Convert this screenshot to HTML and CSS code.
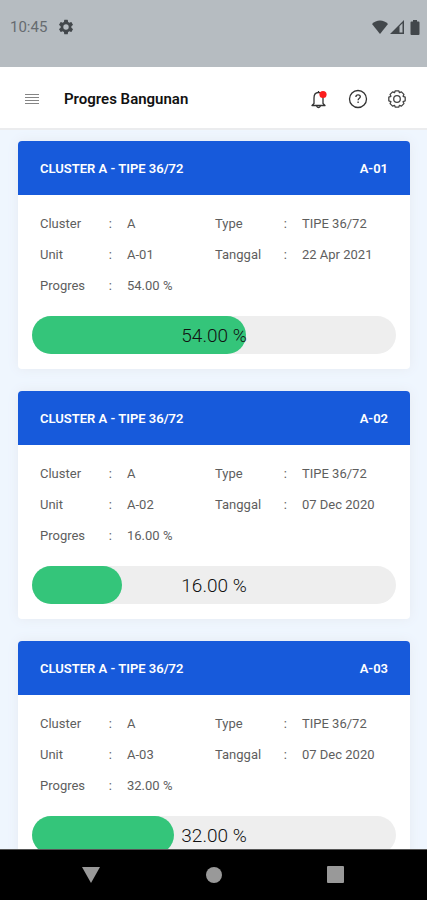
FILE: index.html
```
<!DOCTYPE html>
<html lang="id">
<head>
<meta charset="utf-8">
<meta name="viewport" content="width=device-width, initial-scale=1">
<title>Progres Bangunan</title>
<link rel="stylesheet" href="styles.css">
</head>
<body>
<div class="screen">
  <div class="status-bar">
    <span class="clock">10:45</span>
    <svg class="status-gear" width="18" height="18" viewBox="0 0 24 24" aria-hidden="true"><path fill="currentColor" d="M19.14 12.94c.04-.3.06-.61.06-.94s-.02-.64-.07-.94l2.03-1.58a.49.49 0 0 0 .12-.61l-1.92-3.32a.49.49 0 0 0-.59-.22l-2.39.96a7 7 0 0 0-1.62-.94l-.36-2.54A.48.48 0 0 0 13.92 2.4h-3.84a.48.48 0 0 0-.47.41l-.36 2.54c-.59.24-1.13.57-1.62.94l-2.39-.96a.48.48 0 0 0-.59.22L2.74 8.87a.48.48 0 0 0 .12.61l2.03 1.58a6 6 0 0 0 0 1.88l-2.03 1.58a.49.49 0 0 0-.12.61l1.92 3.32c.12.22.37.29.59.22l2.39-.96c.5.38 1.03.7 1.62.94l.36 2.54c.05.24.24.41.48.41h3.84c.24 0 .44-.17.47-.41l.36-2.54a7 7 0 0 0 1.62-.94l2.39.96c.22.08.47 0 .59-.22l1.92-3.32a.48.48 0 0 0-.12-.61zM12 15.6a3.6 3.6 0 1 1 0-7.2 3.6 3.6 0 0 1 0 7.2z"/></svg>
    <div class="status-icons" aria-hidden="true">
      <svg width="16" height="14" viewBox="0 0 16 14"><path fill="currentColor" d="M8 14 0 4C2 1.800 5 .5 8 .5S14 1.800 16 4z"/></svg>
      <svg class="signal" width="14" height="14" viewBox="0 0 14 14"><path fill="currentColor" d="M0 14 14 0v14zM9.500 6.300v6.200h3V3.300z" fill-rule="evenodd"/></svg>
      <svg width="10" height="15" viewBox="0 0 10 15"><path fill="currentColor" d="M3 0h4v1.500h1.500Q9.500 1.500 9.500 2.500V14q0 1-1 1h-7q-1 0-1-1V2.500q0-1 1-1H3z"/></svg>
    </div>
  </div>

  <header class="app-bar">
    <button class="icon-button" type="button" aria-label="Menu">
      <svg width="16" height="14" viewBox="0 0 16 14"><path d="M1 2.500h14M1 5.500h14M1 8.500h14M1 11.500h14" stroke="#858585"/></svg>
    </button>
    <h1 class="title">Progres Bangunan</h1>
    <div class="actions">
      <button class="icon-button" type="button" aria-label="Notifikasi">
        <svg width="20" height="20" viewBox="0 0 20 20" fill="none" stroke="#333" stroke-width="1.300"><path d="M9.500 2v1.200M5 14.500V9c0-3.500 1.800-5.500 4.500-5.500S14 5.500 14 9v5.500l2 2H3z" stroke-linejoin="round"/><path d="M7.500 17.200q2 2.600 4 0"/><circle cx="14" cy="5.500" r="3.600" fill="#fb1d1d" stroke="none"/></svg>
      </button>
      <button class="icon-button" type="button" aria-label="Bantuan">
        <svg width="20" height="20" viewBox="0 0 20 20" fill="none" stroke="#333" stroke-width="1.300"><circle cx="10" cy="10" r="8.500"/><path d="M7.900 8c0-1.400.9-2.100 2.200-2.100s2.200.8 2.200 1.900c0 1.500-2.200 1.500-2.200 3.400"/><path d="M10.100 12.500v1.500"/></svg>
      </button>
      <button class="icon-button" type="button" aria-label="Pengaturan">
        <svg width="20" height="20" viewBox="0 0 20 20" fill="none" stroke="#444" stroke-width="1.300"><path stroke-linejoin="round" d="M8.300 1.800h3.400l.8 1.900 1.900-.8 2.500 2.500-.8 1.900 2.100.9v3.600l-2.100.9.800 1.900-2.500 2.500-1.900-.8-.8 1.900H8.300l-.8-1.900-1.900.8-2.500-2.500.8-1.900-2.100-.9V8.200l2.100-.9-.8-1.900 2.500-2.500 1.900.8z"/><circle cx="10" cy="10" r="3.300"/></svg>
      </button>
    </div>
  </header>

  <main class="content">
    <article class="card">
      <header class="card-header"><h2>CLUSTER A - TIPE 36/72</h2><span>A-01</span></header>
      <dl class="details">
        <div><dt>Cluster<span>:</span></dt><dd>A</dd></div>
        <div><dt>Type<span>:</span></dt><dd>TIPE 36/72</dd></div>
        <div><dt>Unit<span>:</span></dt><dd>A-01</dd></div>
        <div><dt>Tanggal<span>:</span></dt><dd>22 Apr 2021</dd></div>
        <div><dt>Progres<span>:</span></dt><dd>54.00 %</dd></div>
      </dl>
      <div class="progress" role="progressbar" aria-label="Progres A-01" aria-valuenow="54" style="--value: 0.54"><span>54.00 %</span></div>
    </article>

    <article class="card">
      <header class="card-header"><h2>CLUSTER A - TIPE 36/72</h2><span>A-02</span></header>
      <dl class="details">
        <div><dt>Cluster<span>:</span></dt><dd>A</dd></div>
        <div><dt>Type<span>:</span></dt><dd>TIPE 36/72</dd></div>
        <div><dt>Unit<span>:</span></dt><dd>A-02</dd></div>
        <div><dt>Tanggal<span>:</span></dt><dd>07 Dec 2020</dd></div>
        <div><dt>Progres<span>:</span></dt><dd>16.00 %</dd></div>
      </dl>
      <div class="progress" role="progressbar" aria-label="Progres A-02" aria-valuenow="16" style="--value: 0.16"><span>16.00 %</span></div>
    </article>

    <article class="card">
      <header class="card-header"><h2>CLUSTER A - TIPE 36/72</h2><span>A-03</span></header>
      <dl class="details">
        <div><dt>Cluster<span>:</span></dt><dd>A</dd></div>
        <div><dt>Type<span>:</span></dt><dd>TIPE 36/72</dd></div>
        <div><dt>Unit<span>:</span></dt><dd>A-03</dd></div>
        <div><dt>Tanggal<span>:</span></dt><dd>07 Dec 2020</dd></div>
        <div><dt>Progres<span>:</span></dt><dd>32.00 %</dd></div>
      </dl>
      <div class="progress" role="progressbar" aria-label="Progres A-03" aria-valuenow="32" style="--value: 0.32"><span>32.00 %</span></div>
    </article>
  </main>

  <nav class="system-nav" aria-label="Sistem">
    <button class="icon-button" type="button" aria-label="Kembali"><svg width="20" height="18" viewBox="0 0 20 18"><path d="M1 1h18l-9 16z" fill="#999"/></svg></button>
    <button class="icon-button" type="button" aria-label="Beranda"><svg width="18" height="18" viewBox="0 0 18 18"><circle cx="9" cy="9" r="8" fill="#999"/></svg></button>
    <button class="icon-button" type="button" aria-label="Aplikasi terbaru"><svg width="18" height="18" viewBox="0 0 18 18"><rect x="0" y="0" width="17" height="17" rx="1" fill="#999"/></svg></button>
  </nav>
</div>
</body>
</html>
```
FILE: styles.css
```
* {
  box-sizing: border-box;
}

body {
  margin: 0;
  font-family: Roboto, "Liberation Sans", sans-serif;
  color: #111;
}

h1,
h2,
dl,
dd {
  margin: 0;
}

svg {
  display: block;
}

.screen {
  display: flex;
  flex-direction: column;
  height: 100vh;
  overflow: hidden;
  background: #eff6fe;
}

.status-bar {
  flex: none;
  display: flex;
  align-items: center;
  height: 67px;
  padding: 0 7px 13px 10px;
  background: #b6bcc1;
  color: #42474b;
}

.clock {
  font-size: 15px;
  color: #666b70;
}

.status-gear {
  margin-left: 10px;
}

.status-icons {
  display: flex;
  align-items: center;
  gap: 2px;
  margin-left: auto;
}

.signal {
  margin-right: 4px;
}

.app-bar {
  flex: none;
  display: flex;
  align-items: center;
  height: 63px;
  padding: 2px 20px 0 24px;
  background: #fff;
  border-bottom: 2px solid #ebecee;
}

.icon-button {
  display: block;
  padding: 0;
  border: 0;
  background: none;
}

.title {
  margin-left: 24px;
  font-size: 15px;
  font-weight: 600;
  line-height: 20px;
}

.actions {
  display: flex;
  gap: 19px;
  margin-left: auto;
}

.content {
  flex: 1;
  min-height: 0;
  overflow: hidden;
  display: flex;
  flex-direction: column;
  gap: 22px;
  padding: 11px 17px 0 18px;
}

.card {
  flex: none;
  padding-bottom: 15px;
  border-radius: 4px;
  background: #fff;
  box-shadow: 0 0 12px #e6eaf2;
}

.card-header {
  display: flex;
  align-items: center;
  justify-content: space-between;
  height: 54px;
  padding: 0 22px;
  border-radius: 4px 4px 0 0;
  background: #175adb;
  color: #fff;
  font-size: 13px;
  font-weight: 600;
}

.card-header h2 {
  font-size: 13px;
  font-weight: 600;
}

.details {
  display: grid;
  grid-template-columns: 1fr 1fr;
  padding: 13px 20px 15px 22px;
  font-size: 13px;
  line-height: 31px;
  color: #5e5e5e;
}

.details div,
.details dt {
  display: flex;
  justify-content: space-between;
}

.details dt {
  width: 72px;
}

.details dd {
  width: calc(100% - 87px);
  white-space: nowrap;
}

.progress {
  display: grid;
  grid-template-columns: 100%;
  align-items: center;
  height: 38px;
  margin: 0 14px;
  border-radius: 19px;
  background: #eee;
  font-size: 19px;
}

.progress::before {
  content: "";
  grid-area: 1 / 1;
  width: calc(38px + var(--value) * (100% - 38px));
  height: 38px;
  border-radius: 19px;
  background: #34c57a;
}

.progress span {
  grid-area: 1 / 1;
  text-align: center;
  font-weight: 300;
}

.system-nav {
  flex: none;
  display: flex;
  align-items: center;
  justify-content: center;
  gap: 104px;
  height: 51px;
  padding-right: 2px;
  background: #000;
  border-top: 1px solid #555;
}
```
